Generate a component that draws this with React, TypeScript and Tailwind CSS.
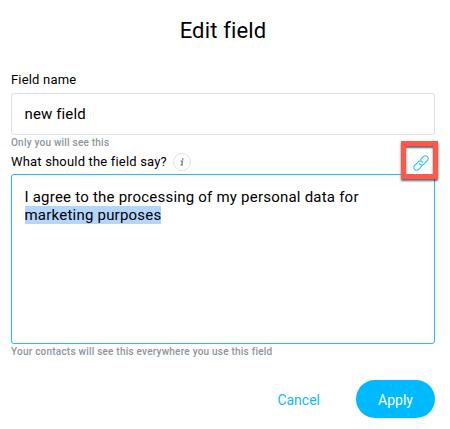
import React, { useState } from "react";

const InfoIcon: React.FC = () => {
  return (
    <span className="ml-[6.5px] flex h-[18px] w-[18px] items-center justify-center rounded-full border border-[#dfe1e3]">
      <svg width="6" height="8" viewBox="0 0 6 8" fill="none" stroke="#65788b">
        <path d="M3.1 0.9h1.3" strokeWidth="1.5" />
        <path d="M1.6 3.2h1.9L2.7 6.8M1.3 7h2.8" strokeWidth="1.2" />
      </svg>
    </span>
  );
};

const LinkIcon: React.FC = () => {
  return (
    <svg width="16" height="16" viewBox="0 0 16 16" fill="none" stroke="#2cbfff" strokeWidth="1.1">
      <g transform="rotate(-45 8 8)">
        <path d="M9.3 9.1c.3-.4.4-.7.4-1.1a2.8 2.8 0 0 0-2.8-2.8H1.9a2.8 2.8 0 0 0 0 5.6h4.4" />
        <path d="M6.7 6.9c-.3.4-.4.7-.4 1.1a2.8 2.8 0 0 0 2.8 2.8h5a2.8 2.8 0 0 0 0-5.6H9.7" />
      </g>
    </svg>
  );
};

const App: React.FC = () => {
  const [name, setName] = useState("new field");

  return (
    <div className="flex h-[429px] w-[450px] flex-col overflow-hidden bg-white pr-[15px] pl-[11px] font-['Roboto',sans-serif] text-black">
      <h1 className="mt-[16px] text-center text-[22px] leading-[30px] tracking-[0.15px]">
        Edit field
      </h1>

      <label htmlFor="name" className="mt-[25px] text-[13px] leading-[18px] tracking-[0.18px]">
        Field name
      </label>
      <input
        id="name"
        className="mt-[4px] h-[42px] rounded-[3px] border border-[#e0e1e2] px-[12.5px] text-[15px] tracking-[0.12px] outline-none"
        value={name}
        onChange={(e) => setName(e.target.value)}
      />
      <p className="mt-px text-[10px] leading-[13px] font-medium tracking-[0.22px] text-[#8c959e]">
        Only you will see this
      </p>

      <div className="relative mt-[2px] mb-px flex h-[22px] items-center">
        <span className="text-[13px] leading-[18px] tracking-[0.18px]">What should the field say?</span>
        <InfoIcon />
        <button
          type="button"
          aria-label="Insert link"
          className="absolute -top-[10px] -right-[3px] z-10 flex h-[38px] w-[37px] items-center justify-center border-[5px] border-[#fd5849] bg-white pt-[5px] pl-[3px] shadow-[0_2px_2px_rgba(0,0,0,0.6),inset_0_2px_2px_rgba(0,0,0,0.6)]"
        >
          <LinkIcon />
        </button>
      </div>

      <div className="h-[170px] rounded-[3px] border border-[#1fbeff] px-[12.5px] pt-[13px] text-[15px] leading-[18px] tracking-[0.22px]">
        I agree to the processing of my personal data for <br />
        <span className="bg-[#b4d6fd]">marketing purposes</span>
      </div>
      <p className="mt-px text-[10px] leading-[13px] font-medium tracking-[0.22px] text-[#8c959e]">
        Your contacts will see this everywhere you use this field
      </p>

      <div className="mt-[22px] flex items-center justify-end">
        <button type="button" className="mr-[36px] pt-[2px] text-[14px] text-[#10b8ff]">
          Cancel
        </button>
        <button type="button" className="h-[38px] w-[79px] rounded-full bg-[#00baff] pt-[2px] text-[14px] text-white">
          Apply
        </button>
      </div>
    </div>
  );
};

export default App;
